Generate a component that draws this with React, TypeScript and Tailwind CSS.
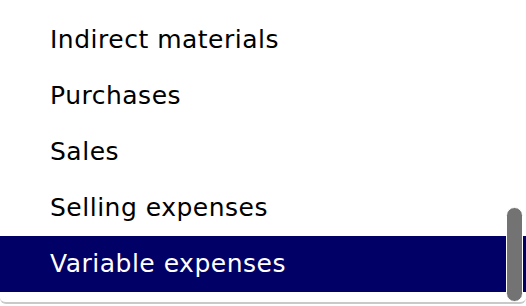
const items = [
  "Indirect materials",
  "Purchases",
  "Sales",
  "Selling expenses",
  "Variable expenses",
];

export default function App() {
  const selected = "Variable expenses";
  return (
    <div className="w-[526px] h-[306px] bg-white overflow-hidden">
      <div className="relative h-[304px] rounded-[6px] border-b-2 border-[#c9c9c9] bg-white pt-[12px] font-['DejaVu_Sans',sans-serif]">
        <ul>
          {items.map((item) => (
            <li
              key={item}
              className={
                item === selected
                  ? "h-[56px] flex items-center pl-[50px] text-[25px] tracking-[0.5px] bg-[#010066] text-white"
                  : "h-[56px] flex items-center pl-[50px] text-[25px] tracking-[0.5px] text-black"
              }
            >
              {item}
            </li>
          ))}
        </ul>
        {/* overlay scrollbar thumb */}
        <div className="absolute left-[506px] top-[207px] w-[17px] h-[95px] rounded-full border border-white bg-[#737373]" />
      </div>
    </div>
  );
}
